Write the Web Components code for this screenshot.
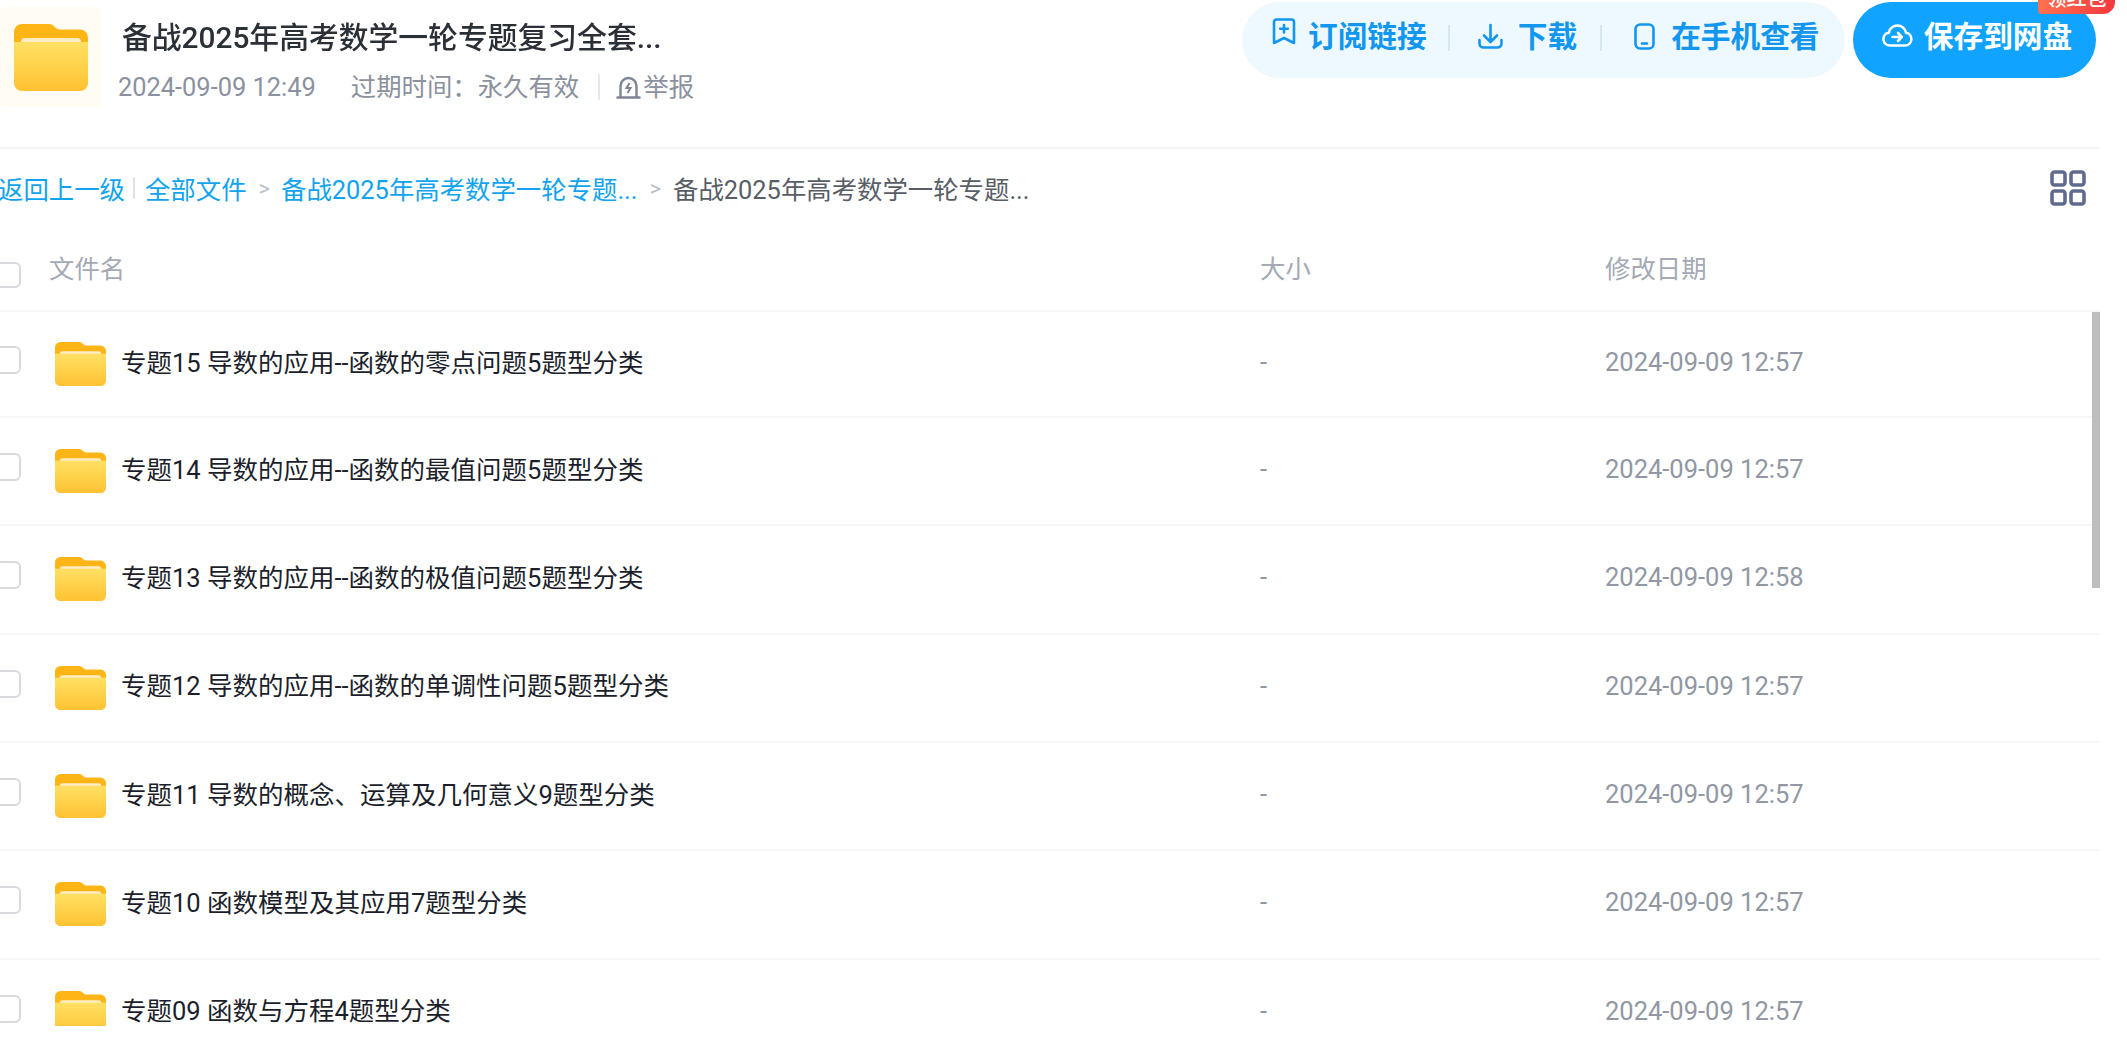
<!DOCTYPE html>
<html lang="zh">
<head>
<meta charset="utf-8">
<title>share</title>
<style>
  html, body { margin: 0; padding: 0; background: #fff; overflow: hidden; height: 100%; }
  body { font-family: Roboto, "Noto Sans CJK SC", sans-serif; }
</style>
</head>
<body>
<share-page>
  <share-header
    slot="header"
    title-text="备战2025年高考数学一轮专题复习全套..."
    created="2024-09-09 12:49"
    expires="过期时间：永久有效"></share-header>
  <crumb-bar slot="crumbs"></crumb-bar>
  <file-table slot="table">
    <file-row name="专题15 导数的应用--函数的零点问题5题型分类" date="2024-09-09 12:57"></file-row>
    <file-row name="专题14 导数的应用--函数的最值问题5题型分类" date="2024-09-09 12:57"></file-row>
    <file-row name="专题13 导数的应用--函数的极值问题5题型分类" date="2024-09-09 12:58"></file-row>
    <file-row name="专题12 导数的应用--函数的单调性问题5题型分类" date="2024-09-09 12:57"></file-row>
    <file-row name="专题11 导数的概念、运算及几何意义9题型分类" date="2024-09-09 12:57"></file-row>
    <file-row name="专题10 函数模型及其应用7题型分类" date="2024-09-09 12:57"></file-row>
    <file-row name="专题09 函数与方程4题型分类" date="2024-09-09 12:57"></file-row>
  </file-table>
</share-page>

<script>
let folderCount = 0;

class FolderIcon extends HTMLElement {
  connectedCallback() {
    const id = 'f' + (++folderCount);
    this.attachShadow({ mode: 'open' }).innerHTML = `
      <style>
        :host { display: block; line-height: 0; }
        svg { width: 100%; height: 100%; display: block; }
      </style>
      <svg viewBox="0 0 74 67" preserveAspectRatio="none">
        <defs>
          <linearGradient id="${id}" x1="0" y1="0" x2="0" y2="1">
            <stop offset="0" stop-color="#ffe063"/>
            <stop offset="1" stop-color="#ffc232"/>
          </linearGradient>
        </defs>
        <path d="M0 8a8 8 0 0 1 8-8h27c5 0 6 5.500 11 5.500h20a8 8 0 0 1 8 8v14H0z" fill="#ffb516"/>
        <path d="M7 18a4 4 0 0 1 4-4h52a4 4 0 0 1 4 4v6H7z" fill="#ffedc4"/>
        <path d="M0 18h74v41a8 8 0 0 1-8 8H8a8 8 0 0 1-8-8z" fill="url(#${id})"/>
      </svg>
    `;
  }
}

class SharePage extends HTMLElement {
  constructor() {
    super();
    this.attachShadow({ mode: 'open' }).innerHTML = `
      <style>
        :host { display: block; width: 2107px; margin-left: -7px; }
      </style>
      <slot name="header"></slot>
      <slot name="crumbs"></slot>
      <slot name="table"></slot>
    `;
  }
}

class ShareHeader extends HTMLElement {
  connectedCallback() {
    this.attachShadow({ mode: 'open' }).innerHTML = `
      <style>
        :host { display: block; position: relative; height: 147px; border-bottom: 2px solid #f4f5f6; box-sizing: content-box; }
        .row { display: flex; height: 100%; }
        .thumb { width: 101px; height: 100px; margin: 7px 0 0 7px; background: #fffdf3; border-radius: 6px; display: flex; align-items: center; justify-content: center; flex: none; }
        folder-icon { width: 74px; height: 67px; }
        .info { margin-left: 17px; padding-top: 18px; flex: none; width: 613px; }
        h1 { margin: 0 0 0 4px; font-size: 29.8px; line-height: 40px; font-weight: 500; color: #2b2f36; white-space: nowrap; filter: blur(.5px); }
        .meta { display: flex; align-items: center; margin-top: 11px; font-size: 25.4px; line-height: 36px; color: #8b919e; white-space: nowrap; }
        .expires { margin-left: 35px; }
        .sep { width: 2px; height: 26px; background: #e6e8eb; margin: 0 16px 0 19px; }
        .report { display: flex; align-items: center; gap: 2px; }
        .report svg { width: 25px; height: 26px; }
        .right { margin-left: auto; display: flex; gap: 8px; align-items: flex-start; padding: 2px 4px 0 0; }
        .pill { display: flex; align-items: center; height: 76px; width: 603px; box-sizing: border-box; padding: 0 0 11px 30px; border-radius: 38px; background: #eef9ff; color: #1397ee; font-size: 29.7px; font-weight: 600; white-space: nowrap; }
        .act { display: flex; align-items: center; }
        .act svg { flex: none; }
        .bar { width: 2px; height: 26px; background: #d8e6ee; flex: none; }
        .save { position: relative; display: flex; align-items: center; justify-content: center; gap: 11px; width: 243px; height: 76px; padding: 0 0 11px 5px; box-sizing: border-box; border-radius: 38px; background: #10a3ff; color: #fff; font-size: 29.7px; font-weight: 600; white-space: nowrap; }
        .badge { position: absolute; top: -12px; right: -19px; width: 77px; height: 24px; box-sizing: border-box; border-radius: 0 0 12px 4px; background: linear-gradient(90deg, #ff7150, #f5383f); color: #fff; font-size: 20px; font-weight: 500; line-height: 19px; text-align: center; overflow: hidden; }
      </style>
      <div class="row">
        <div class="thumb"><folder-icon></folder-icon></div>
        <div class="info">
          <h1>${this.getAttribute('title-text')}</h1>
          <div class="meta">
            <span>${this.getAttribute('created')}</span>
            <span class="expires">${this.getAttribute('expires')}</span>
            <span class="sep"></span>
            <span class="report">
              <svg viewBox="0 0 25 26" fill="none" stroke="#7d8494" stroke-width="2.4">
                <path d="M4.5 23V12a8 8 0 0 1 16 0v11"/>
                <path d="M1.5 23.5h22" stroke-linecap="round"/>
                <path d="M13.5 9l-3 5h4l-3 5" stroke-width="2"/>
              </svg>
              举报
            </span>
          </div>
        </div>
        <div class="right">
          <div class="pill">
            <span class="act">
              <svg width="24" height="27" viewBox="0 0 24 27" fill="none" stroke="#1397ee" stroke-width="2.6" stroke-linejoin="round" stroke-linecap="round" style="margin:-6px 12px 0 0">
                <path d="M2 4a2.500 2.500 0 0 1 2.500-2.500h15A2.500 2.500 0 0 1 22 4v21l-10-5-10 5z"/>
                <path d="M12 7v7.500M8.200 10.700h7.600"/>
              </svg>
              订阅链接
            </span>
            <span class="bar" style="margin:6px 28px 0 21px"></span>
            <span class="act">
              <svg width="25" height="26" viewBox="0 0 25 26" fill="none" stroke="#1397ee" stroke-width="2.6" stroke-linecap="round" stroke-linejoin="round" style="margin:3px 15px 0 0">
                <path d="M12.500 2v16M6 12.500l6.500 6.500 6.500-6.500"/>
                <path d="M1.500 17v3.500a4 4 0 0 0 4 4h14a4 4 0 0 0 4-4V17"/>
              </svg>
              下载
            </span>
            <span class="bar" style="margin:6px 32px 0 23px"></span>
            <span class="act">
              <svg width="21" height="27" viewBox="0 0 21 27" fill="none" stroke="#1397ee" stroke-width="2.6" stroke-linecap="round" style="margin:3px 16px 0 0">
                <rect x="1.500" y="1.500" width="18" height="24" rx="4.500"/>
                <path d="M8 20.500h5"/>
              </svg>
              在手机查看
            </span>
          </div>
          <div class="save">
            <svg width="31" height="25" viewBox="0 0 31 25" fill="none" stroke="#fff" stroke-width="2.6" stroke-linecap="round" stroke-linejoin="round">
              <path d="M8 23.500a6.500 6.500 0 0 1-1.200-12.900 8.800 8.800 0 0 1 17.200 0A6.500 6.500 0 0 1 23 23.500z"/>
              <path d="M10.500 15h9M16 11l3.800 4-3.800 4"/>
            </svg>
            保存到网盘
            <span class="badge">领红包</span>
          </div>
        </div>
      </div>
    `;
  }
}

class CrumbBar extends HTMLElement {
  constructor() {
    super();
    this.attachShadow({ mode: 'open' }).innerHTML = `
      <style>
        :host { display: flex; align-items: center; height: 84px; margin-top: -2px; padding-bottom: 2px; font-size: 25.4px; color: #12a3ee; white-space: nowrap; padding-left: 5px; box-sizing: border-box; }
        .bar { width: 2px; height: 22px; background: #dfe3e8; margin: 0 10px 0 8px; }
        .gt { color: #b9c0cb; font-size: 22px; margin: 0 11px 0 12px; }
        .gt.next { margin: 0 12px 0 12px; }
        .cur { color: #585d66; }
        svg { margin-left: auto; margin-right: 14px; }
      </style>
      <span>返回上一级</span><span class="bar"></span><span>全部文件</span>
      <span class="gt">&gt;</span><span>备战2025年高考数学一轮专题...</span>
      <span class="gt next">&gt;</span><span class="cur">备战2025年高考数学一轮专题...</span>
      <svg width="36" height="36" viewBox="0 0 36 36" fill="none" stroke="#5f6a8f" stroke-width="3.6">
        <rect x="2" y="2" width="13" height="13" rx="2.500"/>
        <rect x="21" y="2" width="13" height="13" rx="2.500"/>
        <rect x="2" y="21" width="13" height="13" rx="2.500"/>
        <rect x="21" y="21" width="13" height="13" rx="2.500"/>
      </svg>
    `;
  }
}

class FileTable extends HTMLElement {
  constructor() {
    super();
    this.attachShadow({ mode: 'open' }).innerHTML = `
      <style>
        :host { display: block; }
        .head { display: grid; grid-template-columns: 56px 1211px 345px 1fr; align-items: center; height: 81px; box-sizing: border-box; padding-bottom: 2px; border-bottom: 2px solid #f5f6f7; font-size: 25.4px; color: #a4a9b4; }
        .box { width: 28px; height: 26px; margin-top: 10px; box-sizing: border-box; border: 2px solid #d8d9dc; border-radius: 6px; }
        .head span { margin-top: -5px; }
        .list { position: relative; height: 714px; overflow: hidden; }
        .thumb { position: absolute; top: -2px; left: 2099px; width: 8px; height: 278px; background: #bdbdbd; }
      </style>
      <div class="head">
        <div class="box"></div><span>文件名</span><span>大小</span><span>修改日期</span>
      </div>
      <div class="list"><slot></slot><div class="thumb"></div></div>
    `;
  }
}

class FileRow extends HTMLElement {
  connectedCallback() {
    this.attachShadow({ mode: 'open' }).innerHTML = `
      <style>
        :host { display: grid; grid-template-columns: 62px 66px 1139px 345px 1fr; align-items: center; height: 108.33px; box-sizing: border-box; border-bottom: 2px solid #f5f6f7; font-size: 25.5px; color: #9197a3; }
        :host(:first-child) { height: 106px; }
        .box { width: 28px; height: 28px; margin-top: -8px; box-sizing: border-box; border: 2px solid #d8d9dc; border-radius: 6px; }
        folder-icon { width: 51px; height: 44px; }
        .name { color: #1c1f2b; white-space: nowrap; margin-top: -8px; }
        .cell { margin-top: -4px; }
      </style>
      <div class="box"></div>
      <folder-icon></folder-icon>
      <div class="name">${this.getAttribute('name')}</div>
      <div class="cell">-</div>
      <div class="cell">${this.getAttribute('date')}</div>
    `;
  }
}

customElements.define('folder-icon', FolderIcon);
customElements.define('share-page', SharePage);
customElements.define('share-header', ShareHeader);
customElements.define('crumb-bar', CrumbBar);
customElements.define('file-table', FileTable);
customElements.define('file-row', FileRow);
</script>
</body>
</html>
